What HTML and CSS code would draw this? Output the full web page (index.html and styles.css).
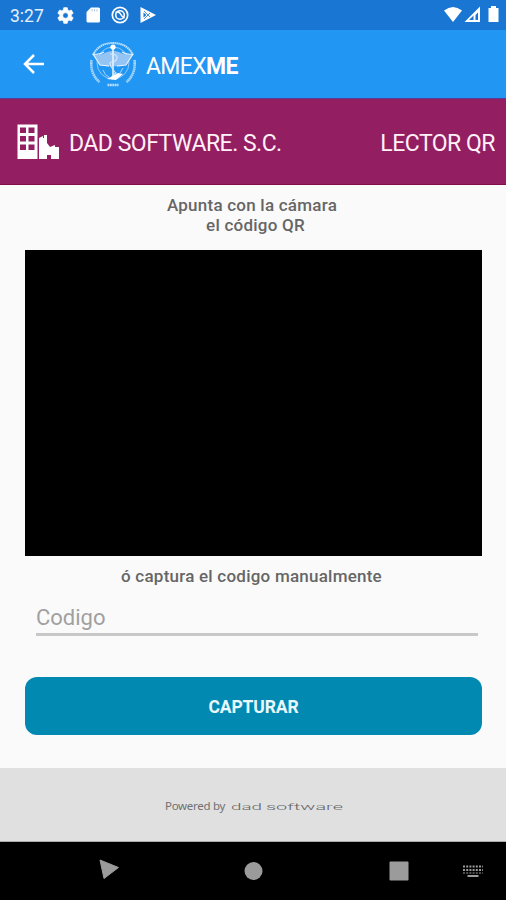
FILE: index.html
```html
<!DOCTYPE html>
<html lang="es">
<head>
<meta charset="utf-8">
<title>AMEXME</title>
<link rel="stylesheet" href="styles.css">
</head>
<body>
<div class="status">
  <span class="time">3:27</span>
  <svg class="gear" width="19" height="19" viewBox="0.500 0.500 23 23"><path fill="#fff" stroke="#fff" stroke-width=".6" d="M19.14 12.94c.04-.3.06-.61.06-.94s-.02-.64-.07-.94l2.03-1.58a.5.5 0 0 0 .12-.61l-1.92-3.32a.5.5 0 0 0-.59-.22l-2.39.96a7 7 0 0 0-1.62-.94l-.36-2.54a.5.5 0 0 0-.48-.41h-3.84a.5.5 0 0 0-.47.41l-.36 2.54a7 7 0 0 0-1.62.94l-2.39-.96a.5.5 0 0 0-.59.22L2.740 8.870a.5.5 0 0 0 .12.61l2.03 1.580a6 6 0 0 0 0 1.880l-2.030 1.580a.5.5 0 0 0-.12.61l1.920 3.320c.12.22.37.29.59.22l2.390-.96c.5.38 1.030.7 1.620.94l.36 2.540c.05.24.24.41.48.41h3.840c.24 0 .44-.17.47-.41l.36-2.540a7 7 0 0 0 1.620-.94l2.390.96c.22.08.47 0 .59-.22l1.920-3.320a.5.5 0 0 0-.12-.61zM12 15.200a3.200 3.200 0 1 1 0-6.400 3.200 3.200 0 0 1 0 6.400z"/></svg>
  <svg class="card" width="14" height="16" viewBox="0 0 14 16"><path fill="#fff" d="M5 .5h7.500q1.500 0 1.500 1.500v12q0 1.500-1.500 1.500H2Q.5 15.500.5 14V5z"/><path stroke="#a9cbee" stroke-width="1" d="M6 2v2.500M8.500 2v2.500M11 2v2.500"/></svg>
  <svg class="ring" width="18" height="18" viewBox="0 0 18 18" fill="none" stroke="#fff"><circle cx="9" cy="9" r="7.700" stroke-width="1.700"/><circle cx="9" cy="9" r="4.300" stroke-width="1.600"/><path stroke-width="1.600" d="M4.500 6.500Q8 5 9.500 8t4 4"/></svg>
  <svg class="play" width="16" height="16" viewBox="0 0 16 16"><path fill="#fff" d="M.5 0v16L16 8z"/><path fill="none" stroke="#4d94dd" stroke-width="1" d="M4 4l6 6M4 12l6-6"/><path fill="#1976d2" d="M3.500 5.500v5L6.500 8z"/></svg>
  <svg class="signals" width="56" height="18" viewBox="0 0 56 18"><path fill="#fff" d="M0 4.500Q9-2.500 18 4.500L9 16z"/><path fill="#fff" fill-rule="evenodd" d="M20.500 16L36 .5V16zm9-2V9.500L25 14zm2 0h2.500V6.500L31.500 9z"/><path fill="#fff" d="M44.500 2H47V0h5v2h2.500v14h-10z"/></svg>
</div>
<header class="appbar">
  <svg class="back" width="22" height="22" viewBox="0 0 22 22" fill="none" stroke="#fff" stroke-width="2.500"><path d="M21 11H2M11 2L2 11l9 9"/></svg>
  <svg class="emblem" width="48" height="48" viewBox="0 0 48 48" fill="none">
    <circle cx="24" cy="23" r="16" stroke="#a9d6fb" stroke-width="1" opacity=".8"/>
    <path d="M4 15Q10 3 24 3t20 12" stroke="#c5e3fc" stroke-width="2" stroke-dasharray="1.500 .5"/>
    <path d="M2.500 20Q1 34 10.500 42" stroke="#a9d6fb" stroke-width="2.600" stroke-dasharray="1.700 .4"/>
    <path d="M45.500 20Q47 34 37.500 42" stroke="#a9d6fb" stroke-width="2.600" stroke-dasharray="1.700 .4"/>
    <path d="M4 14Q12 16 18 12Q24 10 30 12Q36 16 44 14L37 25Q31 27 24 26Q17 27 11 25z" fill="#94c4f4"/>
    <path d="M4 14l7 11 9 1M44 14l-7 11-9 1M4 14q7 1 11-2M44 14q-7 1-11-2" stroke="#e5f3ff" stroke-width="1.200"/>
    <path d="M24 8v30" stroke="#e8f4ff" stroke-width="1.600"/>
    <circle cx="24" cy="7" r="2.600" fill="#fff"/>
    <path d="M21 14q8 0 7 4t-5 4 0 6 4 5-4 4" stroke="#d0e7fd" stroke-width="1.200"/>
    <path d="M18 39l11-6 5 1-7 6z" fill="#fff"/>
    <path d="M14 30q2 6 6 7M34 28l-3 5" stroke="#a9d6fb"/>
    <path d="M18.500 45h11" stroke="#b8ddfb" stroke-width="2.400" stroke-dasharray="1.900 .5"/>
  </svg>
  <h1 class="brand">AMEX<b>ME</b></h1>
</header>
<section class="company">
  <svg class="building" width="43" height="36" viewBox="0 0 43 36"><path fill="#fff" fill-rule="evenodd" d="M.5.500h20V35H.5zm2.500 3v5.500h6v-5.500zm8.500 0v5.500h6v-5.500zM3 12v5.500h6V12zm8.500 0v5.500h6V12zM3 20.500V26h6v-5.500zm8.500 0V26h6v-5.500z"/><path fill="#fff" d="M22 35V14l4-2v2h1v-3h3v8l3 4 5-2v2h4v12h-8v-4h-4v4z"/></svg>
  <span class="name">DAD SOFTWARE. S.C.</span>
  <span class="mode">LECTOR QR</span>
</section>
<main class="content">
  <p class="hint"><span class="line1">Apunta con la cámara</span><br><span class="line2">el código QR</span></p>
  <div class="camera"></div>
  <p class="manual"><span>ó captura el codigo manualmente</span></p>
  <div class="field"><span>Codigo</span></div>
  <button class="submit"><span>CAPTURAR</span></button>
</main>
<footer class="powered">
  <span class="by">Powered by</span>
  <svg class="wordmark" width="114" height="12" viewBox="0 0 114 12"><g transform="scale(1 .8)"><text x="0" y="12" textLength="31" lengthAdjust="spacingAndGlyphs">dad</text><text x="35" y="12" textLength="77" lengthAdjust="spacingAndGlyphs">software</text></g></svg>
</footer>
<nav class="navbar">
  <svg width="506" height="58" viewBox="0 0 506 58" fill="#9b9b9b"><path stroke="#9b9b9b" stroke-linejoin="round" d="M100 18l18.500 7.500L104 36.500z"/><circle cx="253.500" cy="29" r="9"/><rect x="389.500" y="19.500" width="19" height="19" rx="1"/><g fill="none" stroke="#9b9b9b" stroke-width="2"><path stroke-dasharray="2 1.200" stroke-width="2.200" d="M463 24.500h20M463 28h20"/><path stroke-dasharray="2 1.200" stroke-width="1.200" d="M463 31h20"/><path d="M467.500 34h11"/></g></svg>
</nav>
</body>
</html>
```
FILE: styles.css
```css
* { box-sizing: border-box; }
body {
  margin: 0;
  width: 506px;
  height: 900px;
  display: flex;
  flex-direction: column;
  overflow: hidden;
  background: #fafafa;
  font-family: Roboto, "Liberation Sans", sans-serif;
}
h1, p { margin: 0; }
svg { display: block; flex: none; }
.status {
  height: 30px;
  display: flex;
  align-items: center;
  padding: 0 8px 0 10px;
  background: #1976d2;
}
.time { width: 46px; color: #e6f1fc; font-size: 17.500px; line-height: 30px; padding-top: 1px; }
.card { margin-left: 11px; }
.ring { margin-left: 11px; }
.play { margin-left: 11px; }
.signals { margin-left: auto; margin-right: -2px; }
.appbar {
  height: 69px;
  display: flex;
  align-items: center;
  padding: 0 23px;
  background: #2196f3;
  border-bottom: 1px solid #5c3b95;
}
.emblem { margin-left: 44px; }
.brand { margin-left: 9px; color: #fff; font-size: 23px; font-weight: 400; letter-spacing: -.65px; line-height: 28px; padding-top: 5px; }
.brand b { font-weight: 700; }
.company {
  height: 86px;
  display: flex;
  align-items: center;
  padding: 0 11px 0 17px;
  background: #931e62;
  border-bottom: 1px solid #820c4c;
  color: #fff1f8;
  font-size: 23px;
  letter-spacing: -.5px;
  white-space: nowrap;
}
.name { margin-left: 9px; padding-top: 3px; }
.mode { margin-left: auto; padding-top: 3px; }
.content {
  height: 583px;
  display: flex;
  flex-direction: column;
  padding: 10px 24px 0 25px;
}
.hint, .manual {
  color: #666;
  font-size: 17px;
  font-weight: 500;
  letter-spacing: .23px;
  line-height: 20px;
  text-align: center;
  white-space: nowrap;
}
.hint { height: 55px; }
.line1 { margin-right: 3px; }
.line2 { margin-left: 4px; }
.camera { height: 306px; background: #000; }
.manual { margin-top: 10px; height: 23px; padding-right: 4px; }
.field {
  height: 47px;
  margin: 0 4px 0 11px;
  padding-top: 15px;
  border-bottom: 3px solid #c8c8c8;
  color: #a0a0a0;
  font-size: 22px;
  line-height: 28px;
}
.submit {
  height: 58px;
  margin-top: 41px;
  padding: 2px 0 0;
  border: 0;
  border-radius: 12px;
  background: #0289b1;
  color: #e9f8fd;
  font: 700 17.500px Roboto, "Liberation Sans", sans-serif;
  letter-spacing: -.1px;
}
.powered {
  height: 74px;
  display: flex;
  align-items: center;
  padding: 2px 0 0 165px;
  background: #e0e0e0;
  border-bottom: 1px solid #aaa;
}
.by { width: 66px; color: #707070; font: 11.500px "Noto Sans", sans-serif; letter-spacing: -.3px; white-space: nowrap; }
.wordmark { font-family: Roboto, sans-serif; font-weight: 300; font-size: 10.500px; fill: #666; }
.navbar { height: 58px; background: #000; }
```
